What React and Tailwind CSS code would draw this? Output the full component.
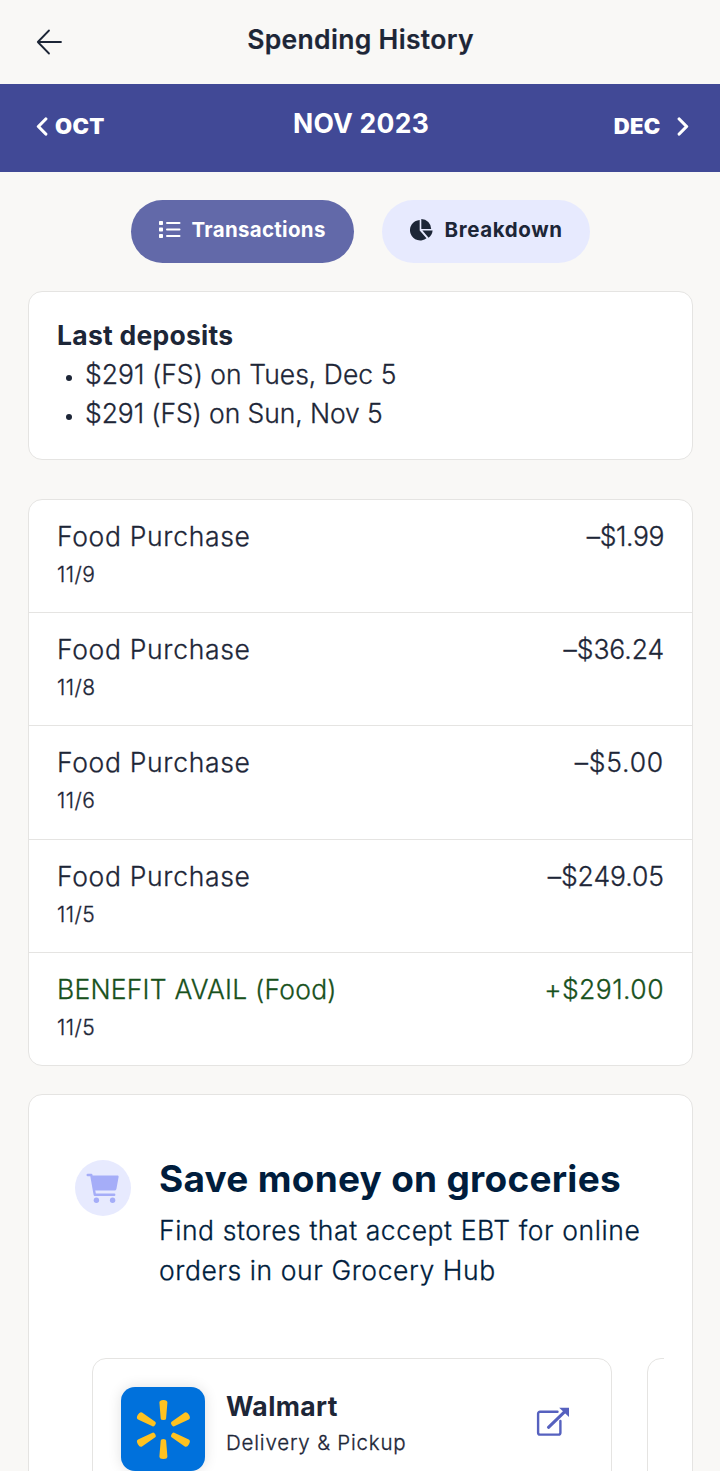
import React from "react";

const transactions = [
  { label: "Food Purchase", date: "11/9", amount: "–$1.99", tracking: "tracking-[-0.4px]" },
  { label: "Food Purchase", date: "11/8", amount: "–$36.24", tracking: "tracking-[-0.1px]" },
  { label: "Food Purchase", date: "11/6", amount: "–$5.00", tracking: "tracking-[0.8px]" },
  { label: "Food Purchase", date: "11/5", amount: "–$249.05", tracking: "tracking-[-0.05px]" },
  { label: "BENEFIT AVAIL (Food)", date: "11/5", amount: "+$291.00", tracking: "tracking-[0.45px]", credit: true },
];

function BackArrow() {
  return (
    <svg className="h-[26px] w-[26px]" viewBox="0 0 26 26" fill="none" stroke="currentColor" strokeWidth="1.8" strokeLinecap="round" strokeLinejoin="round">
      <path d="M25 13H1.8M13 1.5L1.800 13L13 24.500" />
    </svg>
  );
}

function Chevron({ className }) {
  return (
    <svg className={className} viewBox="0 0 12 19" fill="none" stroke="currentColor" strokeWidth="3.2" strokeLinecap="round" strokeLinejoin="round">
      <path d="M9.800 2L2.400 9.500l7.400 7.500" />
    </svg>
  );
}

function ListIcon() {
  return (
    <svg className="h-[17px] w-[22px]" viewBox="0 0 22 17" fill="currentColor">
      <rect x="0" y="0" width="4" height="4" rx="0.7" />
      <rect x="0" y="6.5" width="4" height="4" rx="0.7" />
      <rect x="0" y="13" width="4" height="4" rx="0.7" />
      <rect x="7" y="1" width="14.5" height="2" rx="1" />
      <rect x="7" y="7.5" width="14.5" height="2" rx="1" />
      <rect x="7" y="14" width="14.5" height="2" rx="1" />
    </svg>
  );
}

function PieIcon() {
  return (
    <svg className="h-[22px] w-[23px]" viewBox="0 0 23 22" fill="currentColor">
      <path d="M9.7 1v10.6l6.8 7.6A10.2 10.2 0 1 1 9.7 1Z" />
      <path d="M11.3 0a10 10 0 0 1 9.900 10h-9.900Z" />
      <path d="M12.400 11.500H22.600a10 10 0 0 1-4 7.200Z" />
    </svg>
  );
}

function CartIcon() {
  return (
    <svg className="h-[31px] w-[34px]" viewBox="0 0 34 31" fill="#a5adf8">
      <path d="M1.7 2h3.6l3.5 19.8h19.4" fill="none" stroke="#a5adf8" strokeWidth="2.4" strokeLinecap="round" strokeLinejoin="round" />
      <path d="M6 2.6h25.5c.8 0 1.300.6 1.100 1.400L30.400 16c-.2.9-.9 1.5-1.800 1.500H8.500Z" />
      <circle cx="10.4" cy="27.2" r="2.7" />
      <circle cx="26.6" cy="27.2" r="2.7" />
    </svg>
  );
}

function ExternalIcon() {
  return (
    <svg className="h-[30px] w-[34px]" viewBox="0 0 34 30" fill="none" stroke="#5661bf" strokeWidth="2.4">
      <path d="M21.5 4.7H4a1.900 1.900 0 0 0-1.900 1.900V25.700A1.900 1.900 0 0 0 4 27.600H22.500a1.900 1.900 0 0 0 1.900-1.900V14" strokeLinecap="round" />
      <path d="M12.5 20.3L28.500 4.900" strokeWidth="3.100" strokeLinecap="round" />
      <path d="M23.200 0.800H33V10Z" fill="#5661bf" stroke="none" />
    </svg>
  );
}

function Spark() {
  const ray = "M38 15.500a4 2.500 0 0 1 8 0L44.700 31.500a2.700 1.600 0 0 1-5.400 0Z";
  return (
    <svg className="h-[84px] w-[84px]" viewBox="0 0 84 84" fill="#ffc220">
      {[0, 60, 120, 180, 240, 300].map((angle) => (
        <path key={angle} d={ray} transform={`translate(0.4 0) rotate(${angle} 42 42.5)`} />
      ))}
    </svg>
  );
}

function Transaction({ label, date, amount, tracking, credit }) {
  return (
    <li className="flex h-[113.200px] justify-between border-b border-[#e5e4e2] px-7 pt-[17px] [-webkit-text-stroke:0.3px] last:border-b-0">
      <div>
        <p className={`text-[26.500px] leading-[39px] ${credit ? "tracking-[0.220px] text-[#18511c]" : "tracking-[0.680px]"}`}>{label}</p>
        <p className="text-[21px] leading-[38px] tracking-[0.500px]">{date}</p>
      </div>
      <span className={`text-[26.500px] leading-[39px] ${tracking} ${credit ? "text-[#18511c]" : ""}`}>{amount}</span>
    </li>
  );
}

export default function App() {
  return (
    <div className="flex h-[1471px] w-[720px] flex-col overflow-hidden bg-[#f9f8f6] font-['Inter',sans-serif] font-light text-[#1d2637]">
      <header className="grid h-[84px] shrink-0 grid-cols-[1fr_auto_1fr] items-center px-9">
        <BackArrow />
        <h1 className="pb-1.5 pl-px text-[26.500px] leading-10 font-semibold tracking-[0.320px] [-webkit-text-stroke:0.2px]">Spending History</h1>
      </header>

      <nav className="grid h-[88px] shrink-0 grid-cols-[1fr_auto_1fr] items-center bg-[#414996] px-9 text-white">
        <div className="flex items-center gap-[7px] pb-[3px]">
          <Chevron className="h-[19px] w-3" />
          <span className="origin-left scale-x-105 text-[21px] leading-8 font-black tracking-[0.300px]">OCT</span>
        </div>
        <h2 className="pb-2.5 pl-0.5 text-[26.500px] leading-10 font-bold tracking-[0.270px]">NOV 2023</h2>
        <div className="-mr-[5px] flex items-center justify-end gap-[17px] pb-[3px]">
          <span className="origin-right scale-x-105 text-[21px] leading-8 font-black tracking-[0.200px]">DEC</span>
          <Chevron className="h-[19px] w-3 rotate-180" />
        </div>
      </nav>

      <div className="mt-7 flex shrink-0 justify-center gap-7 text-[20.500px] font-bold">
        <button className="flex h-[63px] w-[223px] items-center gap-[11px] rounded-full bg-[#6269a9] pb-1 pl-7 text-white">
          <ListIcon />
          <span className="pt-px tracking-[0.300px]">Transactions</span>
        </button>
        <button className="flex h-[63px] w-[208px] items-center gap-3 rounded-full bg-[#e7eafe] pb-1 pl-7">
          <PieIcon />
          <span className="pt-px tracking-[0.620px]">Breakdown</span>
        </button>
      </div>

      <section className="mx-7 mt-7 h-[169px] w-[665px] shrink-0 rounded-[14px] border border-[#e5e4e2] bg-white px-7 pt-6 text-[26.500px] leading-[39px]">
        <h3 className="font-bold tracking-[0.260px]">Last deposits</h3>
        <ul className="[-webkit-text-stroke:0.3px]">
          <li className="flex items-center">
            <span className="mt-1.5 mr-[13px] ml-[9px] size-1.5 rounded-full bg-[#1d2637]" />
            <span className="tracking-[0.030px]">$291 (FS) on Tues, Dec 5</span>
          </li>
          <li className="flex items-center">
            <span className="mt-1.5 mr-[13px] ml-[9px] size-1.5 rounded-full bg-[#1d2637]" />
            <span className="tracking-[-0.100px]">$291 (FS) on Sun, Nov 5</span>
          </li>
        </ul>
      </section>

      <ul className="mx-7 mt-[39px] h-[567px] w-[665px] shrink-0 overflow-hidden rounded-[14px] border border-[#e5e4e2] bg-white">
        {transactions.map((item, index) => (
          <Transaction key={index} {...item} />
        ))}
      </ul>

      <section className="mx-7 mt-7 h-[400px] w-[665px] shrink-0 rounded-t-[14px] border border-[#e5e4e2] bg-white pr-7 text-[#001d3d]">
        <div className="flex gap-7 pt-[65px] pl-[46px]">
          <div className="flex size-14 shrink-0 items-center justify-center rounded-full bg-[#e7eafe]">
            <CartIcon />
          </div>
          <div className="whitespace-nowrap">
            <h3 className="text-[37px] leading-[38px] font-bold tracking-[0.260px]">Save money on groceries</h3>
            <p className="mt-3 text-[26.500px] leading-10 tracking-[0.580px] [-webkit-text-stroke:0.3px]">
              Find stores that accept EBT for online
              <br />
              orders in our Grocery Hub
            </p>
          </div>
        </div>
        <div className="mt-[68px] ml-[63px] flex h-[140px] gap-[35px] overflow-hidden text-[#1d2637]">
          <article className="flex w-[520px] shrink-0 rounded-t-[14px] border border-[#e5e4e2] pt-7 pl-7">
            <div className="size-[84px] shrink-0 rounded-[14px] bg-[#0071dc] shadow-[0_0_14px_rgba(0,0,0,0.12)]">
              <Spark />
            </div>
            <div className="-mt-px ml-[21px] w-[310px] whitespace-nowrap">
              <h4 className="text-[26.500px] leading-10 font-bold tracking-[0.400px]">Walmart</h4>
              <p className="text-[20.500px] leading-[34px] tracking-[0.800px] [-webkit-text-stroke:0.3px]">Delivery &amp; Pickup</p>
            </div>
            <div className="mt-5">
              <ExternalIcon />
            </div>
          </article>
          <article className="w-[520px] shrink-0 rounded-t-[14px] border border-[#e5e4e2]" />
        </div>
      </section>
    </div>
  );
}
